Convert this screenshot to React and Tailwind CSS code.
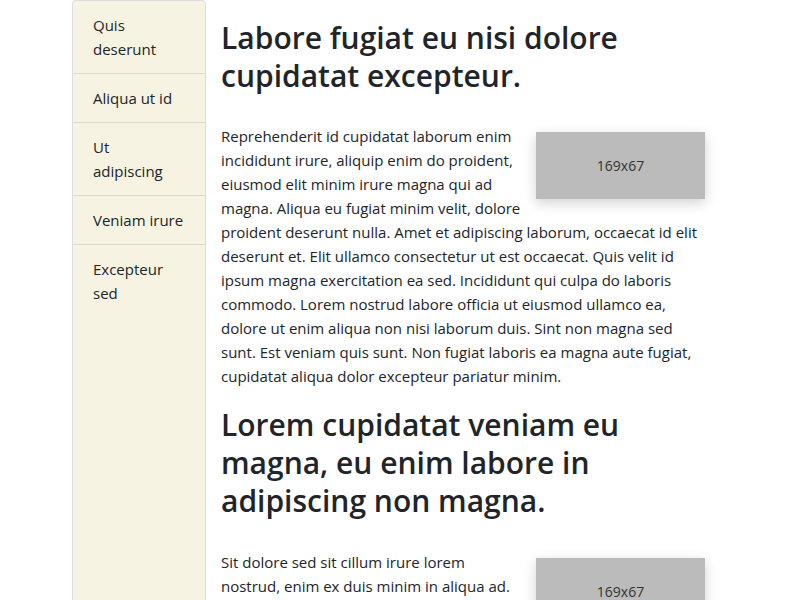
const items = [
  ["Quis", "deserunt"],
  ["Aliqua ut id"],
  ["Ut", "adipiscing"],
  ["Veniam irure"],
  ["Excepteur", "sed"],
];

function Placeholder({ gap }) {
  return (
    <div
      className={
        "float-right mt-2 mb-2 w-[169px] h-[67px] bg-[#bbbbbb] shadow-[0_4px_12px_rgba(0,0,0,0.18)] flex items-center justify-center text-[14px] text-[#333] " +
        gap
      }
    >
      169x67
    </div>
  );
}

export default function App() {
  return (
    <div
      className="flex min-h-[600px] bg-white text-[#212529]"
      style={{ fontFamily: '"Open Sans", "Noto Sans", sans-serif' }}
    >
      <div className="ml-[72px] w-[134px] shrink-0 bg-[#f6f3e2] border border-[#dddddd] rounded-t-[4px]">
        {items.map((lines, i) => (
          <div
            key={i}
            className={
              "pl-[20px] pr-3 py-3 text-[15px] leading-6 " +
              (i < items.length - 1 ? "border-b border-[#dcdacb]" : "")
            }
          >
            {lines.map((l) => (
              <div key={l}>{l}</div>
            ))}
          </div>
        ))}
      </div>
      <div className="w-[484px] ml-[15px]">
        <h1 className="mt-[19px] text-[30px] leading-[38px] font-semibold">
          Labore fugiat eu nisi dolore cupidatat excepteur.
        </h1>
        <div className="mt-[29px] text-[15px] leading-6">
          <Placeholder gap="ml-[8px]" />
          Reprehenderit id cupidatat laborum enim incididunt irure, aliquip enim do proident,
          eiusmod elit minim irure magna qui ad magna. Aliqua eu fugiat minim velit, dolore
          proident deserunt nulla. Amet et adipiscing laborum, occaecat id elit deserunt et.
          Elit ullamco consectetur ut est occaecat. Quis velit id ipsum magna exercitation ea
          sed. Incididunt qui culpa do laboris commodo. Lorem nostrud labore officia ut eiusmod
          ullamco ea, dolore ut enim aliqua non nisi laborum duis. Sint non magna sed sunt. Est
          veniam quis sunt. Non fugiat laboris ea magna aute fugiat, cupidatat aliqua dolor
          excepteur pariatur minim.
        </div>
        <h1 className="mt-[18px] text-[30px] leading-[38px] font-semibold">
          Lorem cupidatat veniam eu magna, eu enim labore in adipiscing non magna.
        </h1>
        <div className="mt-[30px] text-[15px] leading-6">
          <Placeholder gap="ml-4" />
          Sit dolore sed sit cillum irure lorem nostrud, enim ex duis minim in aliqua ad.
          Cupidatat ut magna ullamco esse, elit sunt in nisi ipsum veniam consequat. Sunt
          laboris do et dolore.
        </div>
      </div>
    </div>
  );
}
